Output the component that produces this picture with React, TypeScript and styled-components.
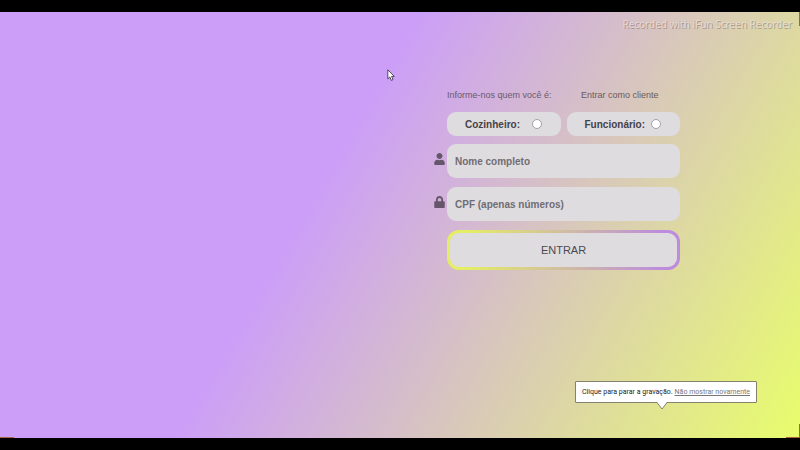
import React from 'react';
import styled, { createGlobalStyle } from 'styled-components';
import { FaLock, FaUser } from 'react-icons/fa';

const GlobalStyle = createGlobalStyle`
  * { box-sizing: border-box; }
  body { margin: 0; background: #000; font-family: "Liberation Sans", Arial, sans-serif; }
`;

const Frame = styled.div`
  display: flex;
  flex-direction: column;
  min-height: 100vh;
  padding: 12px 0;
  background: #000;
`;

const Screen = styled.main`
  position: relative;
  flex: 1;
  display: flex;
  justify-content: flex-end;
  align-items: flex-start;
  padding: 76px 15% 0 0;
  overflow: hidden;
  background: linear-gradient(120deg, #cc9ef8 40%, #e8fd6c 100%);
`;

const Watermark = styled.div`
  position: absolute;
  top: 5px;
  right: 8px;
  font: 10px/14px "Noto Sans", sans-serif;
  color: rgba(236, 222, 214, 0.8);
  text-shadow: 1px 1px 0 rgba(120, 105, 100, 0.5);
`;

const Form = styled.form`
  display: flex;
  flex-direction: column;
  width: 246px;
`;

const Intro = styled.div`
  display: grid;
  grid-template-columns: 134px 1fr;
  margin: 0 0 10px 13px;
  font-size: 9px;
  line-height: 14px;
  color: #6b5a6c;
`;

const ClientLink = styled.a`
  color: #6b5a5c;
  text-decoration: none;
`;

const Roles = styled.div`
  display: grid;
  grid-template-columns: 1fr 1fr;
  gap: 6px;
  margin: 0 0 8px 13px;
`;

const Role = styled.label<{ $gap: number }>`
  display: flex;
  align-items: center;
  gap: ${(p) => p.$gap}px;
  height: 24px;
  padding-left: 18px;
  border-radius: 9px;
  background: #dfdce0;
  color: #454247;
  font-size: 10px;
  font-weight: bold;
`;

const Radio = styled.input`
  appearance: none;
  width: 10px;
  height: 10px;
  margin: 0;
  border: 1px solid #a3a0a6;
  border-radius: 50%;
  background: #fff;
  &:checked { background: radial-gradient(#555 40%, #fff 45%); }
`;

const Field = styled.label`
  display: grid;
  grid-template-columns: 11px 1fr;
  gap: 2px;
  align-items: center;
  margin-bottom: 9px;
  color: #66566b;
  svg { width: 11px; height: 12px; margin-bottom: 4px; }
`;

const TextInput = styled.input`
  width: 100%;
  height: 34px;
  padding: 0 8px;
  border: 0;
  border-radius: 9px;
  background: #dfdce0;
  color: #4c494e;
  font: bold 10px "Liberation Sans", Arial, sans-serif;
  &::placeholder { color: #706d72; opacity: 1; }
`;

const Submit = styled.button`
  height: 40px;
  margin-left: 13px;
  border: 3px solid transparent;
  border-radius: 12px;
  background:
    linear-gradient(#dfdce0, #dfdce0) padding-box,
    linear-gradient(90deg, #e4ee64 8%, #bd8cdc 92%) border-box;
  color: #4c494e;
  font: 11px "Liberation Sans", Arial, sans-serif;
`;

const Cursor = styled.svg`
  position: absolute;
  left: 387px;
  top: 57px;
  width: 8px;
  height: 12px;
`;

const Tip = styled.aside`
  position: absolute;
  right: 43px;
  bottom: 35px;
  display: flex;
  align-items: center;
  gap: 2px;
  height: 22px;
  padding: 0 6px;
  border: 1px solid #86806f;
  border-radius: 1px;
  background: #fff;
  color: #222;
  font: 7px/10px Roboto, sans-serif;
  white-space: nowrap;
`;

const TipLink = styled.a`
  color: #777;
`;

const TipTail = styled.svg`
  position: absolute;
  right: 89px;
  top: 20px;
  width: 10px;
  height: 8px;
`;

const CaptureCorner = styled.span<{ $at: 'topRight' | 'bottomRight' | 'bottomLeft' }>`
  position: absolute;
  width: 14px;
  height: 14px;
  border: 0 solid #a8623f;
  ${(p) => p.$at === 'topRight' && 'top: 0; right: 0; border-right-width: 1px;'}
  ${(p) => p.$at === 'bottomRight' && 'bottom: 0; right: 0; border-right-width: 1px; border-bottom-width: 1px;'}
  ${(p) => p.$at === 'bottomLeft' && 'bottom: 0; left: 0; border-bottom-width: 1px;'}
`;

export default function App() {
  return (
    <Frame>
      <GlobalStyle />
      <Screen>
        <Watermark>Recorded with iFun Screen Recorder</Watermark>
        <Form onSubmit={(e) => e.preventDefault()}>
          <Intro>
            <span>Informe-nos quem você é:</span>
            <ClientLink href="#cliente">Entrar como cliente</ClientLink>
          </Intro>
          <Roles>
            <Role $gap={12}>
              Cozinheiro:
              <Radio type="radio" name="role" value="cozinheiro" />
            </Role>
            <Role $gap={6}>
              Funcionário:
              <Radio type="radio" name="role" value="funcionario" />
            </Role>
          </Roles>
          <Field>
            <FaUser />
            <TextInput type="text" placeholder="Nome completo" aria-label="Nome completo" />
          </Field>
          <Field>
            <FaLock />
            <TextInput
              type="text"
              inputMode="numeric"
              placeholder="CPF (apenas números)"
              aria-label="CPF (apenas números)"
            />
          </Field>
          <Submit type="submit">ENTRAR</Submit>
        </Form>
        <Cursor viewBox="0 0 8 12" aria-hidden="true">
          <path
            d="M.8.8V9.8L2.8 8l1.5 3.4 1.7-.8L4.6 7.4h2.7Z"
            fill="#fff"
            stroke="#453650"
            strokeWidth="0.9"
            strokeLinejoin="round"
          />
        </Cursor>
        <Tip>
          <span>Clique para parar a gravação.</span>
          <TipLink href="#ocultar">Não mostrar novamente</TipLink>
          <TipTail viewBox="0 0 10 8" aria-hidden="true">
            <path d="M0 0H10L5 7Z" fill="#fff" />
            <path d="M0 .5L5 7L10 .5" fill="none" stroke="#86806f" />
          </TipTail>
        </Tip>
        <CaptureCorner $at="topRight" />
        <CaptureCorner $at="bottomRight" />
        <CaptureCorner $at="bottomLeft" />
      </Screen>
    </Frame>
  );
}
